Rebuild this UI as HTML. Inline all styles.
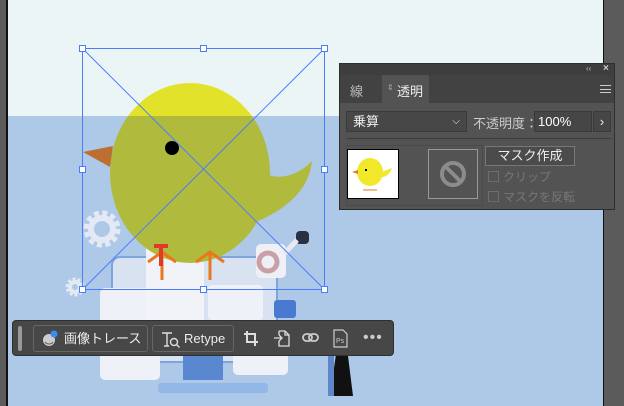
<!DOCTYPE html>
<html><head><meta charset="utf-8"><style>
*{margin:0;padding:0;box-sizing:border-box}
body{width:624px;height:406px;overflow:hidden;background:#5b5b5b;position:relative;font-family:"Liberation Sans","Noto Sans CJK JP",sans-serif}
.a{position:absolute}
#panel{left:339px;top:63px;width:276px;height:147px;background:#535353;border:1px solid #2e2e2e;color:#ddd;font-size:12px}
.cb{position:absolute;width:11px;height:11px;border:1px solid #6e6e6e}
#tb{left:12px;top:320px;width:382px;height:36px;background:#474747;border:1px solid #2f2f2f;border-radius:4px}
.btn{position:absolute;top:4px;height:27px;border:1px solid #666;border-radius:3px;color:#eee;font-size:13px;line-height:25px}
</style></head><body>
<div class="a" style="left:6px;top:0;width:2px;height:406px;background:#111"></div>
<div class="a" style="left:8px;top:0;width:595px;height:406px;background:#aec8e8;overflow:hidden">
<svg width="595" height="406" style="position:absolute;left:0;top:0">
<defs>
<clipPath id="top"><rect x="0" y="0" width="595" height="116"/></clipPath>
<clipPath id="bot"><rect x="0" y="116" width="595" height="300"/></clipPath>
<g id="bird">
<ellipse cx="182" cy="173" rx="80" ry="90"/>
<path d="M258 170 L263 176 Q285 180 304 161 Q300 200 248 222 Z"/>
</g>
</defs>
<rect x="0" y="0" width="595" height="116" fill="#ebf5f6"/>
<g>
<circle cx="94" cy="229" r="16" fill="none" stroke="#e4eaf3" stroke-width="5" stroke-dasharray="5 3.4"/>
<circle cx="94" cy="229" r="11" fill="none" stroke="#e4eaf3" stroke-width="6"/>
<circle cx="67" cy="287" r="8" fill="none" stroke="#e4eaf3" stroke-width="3" stroke-dasharray="3 2"/>
<circle cx="67" cy="287" r="5" fill="none" stroke="#e4eaf3" stroke-width="4"/>
<rect x="104" y="257" width="165" height="105" rx="8" fill="#d8e2f1" stroke="#7fa3dc" stroke-width="2"/>
<rect x="92" y="288" width="60" height="92" rx="5" fill="#eef1f8"/>
<rect x="138" y="235" width="58" height="95" rx="5" fill="#f1f3f9"/>
<rect x="200" y="285" width="55" height="35" rx="4" fill="#eef1f7"/>
<rect x="225" y="335" width="55" height="40" rx="5" fill="#eef1f7"/>
<rect x="248" y="244" width="30" height="34" rx="5" fill="#eef0f6"/>
<rect x="175" y="345" width="40" height="35" fill="#5a88d0"/>
<rect x="150" y="383" width="110" height="10" rx="3" fill="#92b8e8"/>
<rect x="266" y="300" width="22" height="18" rx="3" fill="#4a7ad0"/>
<path d="M330 340 L322 396 L345 396 L338 340Z" fill="#111"/>
<rect x="320" y="340" width="6" height="56" fill="#5e86c8"/>
</g>
<circle cx="260" cy="262" r="9" fill="none" stroke="#c9a0a8" stroke-width="5"/>
<rect x="288" y="231" width="13" height="13" rx="4" fill="#2a3140"/>
<path d="M289 240 L276 254" stroke="#e8eaf0" stroke-width="5"/>
<use href="#bird" fill="#e3e22a" clip-path="url(#top)"/>
<use href="#bird" fill="#b0bb3e" clip-path="url(#bot)"/>
<path d="M75 152 L105 146 L102 167 Z" fill="#bd6f31"/>
<circle cx="164" cy="148" r="7" fill="#000"/>
<g stroke="#e8781e" stroke-width="3" fill="none">
<path d="M154 252 V280 M140 262 L154 252 L168 262"/>
<path d="M202 252 V280 M188 262 L202 252 L216 262"/>
</g>
<path d="M146 246 h14 M153 246 v20" stroke="#e03a2a" stroke-width="4"/>
<g stroke="#4a7cff" stroke-width="1" fill="none">
<rect x="74.5" y="48.5" width="242" height="241"/>
<path d="M74.5 48.5 L316.5 289.5 M316.5 48.5 L74.5 289.5"/>
</g>
<g fill="#fff" stroke="#4a7cff">
<rect x="71.5" y="45.5" width="6" height="6"/><rect x="192.5" y="45.5" width="6" height="6"/><rect x="313.5" y="45.5" width="6" height="6"/>
<rect x="71.5" y="166.5" width="6" height="6"/><rect x="313.5" y="166.5" width="6" height="6"/>
<rect x="71.5" y="286.5" width="6" height="6"/><rect x="192.5" y="286.5" width="6" height="6"/><rect x="313.5" y="286.5" width="6" height="6"/>
</g>
</svg>
</div>
<div class="a" style="left:603px;top:0;width:1px;height:406px;background:#111"></div>

<div class="a" id="panel">
<div class="a" style="left:0;top:0;width:274px;height:11px;background:#3e3e3e"></div>
<div class="a" style="left:246px;top:0;font-size:8px;color:#bbb">‹‹</div>
<div class="a" style="left:263px;top:-1px;font-size:10px;color:#ccc;font-weight:bold">×</div>
<div class="a" style="left:0;top:11px;width:274px;height:28px;background:#424242"></div>
<div class="a" style="left:42px;top:11px;width:47px;height:28px;background:#535353"></div>
<div class="a" style="left:10px;top:17px;font-size:13px;color:#bbb">線</div>
<div class="a" style="left:47px;top:19px;font-size:8px;color:#aaa">⇕</div>
<div class="a" style="left:57px;top:17px;font-size:13px;color:#eee">透明</div>
<div class="a" style="left:260px;top:21px;width:11px;height:8px;border-top:1px solid #ccc;border-bottom:1px solid #ccc"></div>
<div class="a" style="left:260px;top:25px;width:11px;height:1px;background:#ccc"></div>
<div class="a" style="left:6px;top:47px;width:121px;height:21px;background:#474747;border:1px solid #3a3a3a;color:#eee;font-size:13px;line-height:19px;padding-left:6px">乗算<span style="position:absolute;right:6px;top:0;font-size:10px">⌵</span></div>
<div class="a" style="left:133px;top:49px;font-size:13px;color:#ccc">不透明度：</div>
<div class="a" style="left:194px;top:47px;width:58px;height:21px;background:#464646;border:1px solid #3a3a3a;color:#fff;font-size:13px;line-height:19px;padding-left:3px">100%</div>
<div class="a" style="left:253px;top:47px;width:18px;height:21px;background:#464646;border:1px solid #3a3a3a;color:#eee;font-size:13px;line-height:19px;text-align:center">›</div>
<div class="a" style="left:7px;top:74px;width:264px;height:1px;background:#3c3c3c"></div>
<div class="a" style="left:6px;top:81px;width:137px;height:61px;border:1px solid #4a4a4a"></div>
<div class="a" style="left:7px;top:85px;width:52px;height:50px;background:#fff;border:1px solid #000">
<svg width="50" height="48"><ellipse cx="22" cy="22" rx="13" ry="14" fill="#f0e828"/><path d="M34 22 L44 18 Q40 28 32 27Z" fill="#f0e828"/><path d="M4 22 L10 20 L10 24Z" fill="#e87a1e"/><rect x="17" y="19" width="2" height="2"/><path d="M15 40 h14" stroke="#e87a1e"/></svg></div>
<div class="a" style="left:88px;top:85px;width:50px;height:50px;border:1px solid #999"><svg width="48" height="48"><circle cx="24" cy="24" r="11" fill="none" stroke="#8c8c8c" stroke-width="4"/><path d="M16 16 L32 32" stroke="#8c8c8c" stroke-width="4"/></svg></div>
<div class="a" style="left:145px;top:82px;width:90px;height:20px;border:1px solid #777;background:#4b4b4b;color:#eee;font-size:13px;text-align:center;line-height:18px">マスク作成</div>
<div class="cb" style="left:148px;top:107px"></div><div class="a" style="left:163px;top:104px;font-size:12px;color:#777">クリップ</div>
<div class="cb" style="left:148px;top:127px"></div><div class="a" style="left:163px;top:124px;font-size:12px;color:#777">マスクを反転</div>
</div>

<div class="a" id="tb">
<div class="a" style="left:5px;top:5px;width:4px;height:25px;background:#999;border-radius:2px"></div>
<div class="btn" style="left:20px;width:115px;padding-left:30px">画像トレース
<svg class="a" style="left:7px;top:4px" width="18" height="18"><circle cx="8" cy="10" r="6" fill="#ccc"/><path d="M4 12 a5 5 0 0 0 8 0" stroke="#555" fill="none"/><circle cx="13" cy="4" r="3.5" fill="#3b8df2"/></svg></div>
<div class="btn" style="left:139px;width:82px;padding-left:31px">Retype
<svg class="a" style="left:8px;top:5px" width="20" height="18" fill="none" stroke="#ddd" stroke-width="1.4"><path d="M1 2h10M6 2v13M3 15h5"/><circle cx="13" cy="11" r="3.5"/><path d="M15.5 13.5l3 3"/></svg></div>
<svg class="a" style="left:230px;top:9px" width="16" height="17" fill="none" stroke="#ddd" stroke-width="2"><path d="M4 1v11h11M1 4h11v12"/></svg>
<svg class="a" style="left:260px;top:8px" width="18" height="18" fill="none" stroke="#ddd" stroke-width="1.3"><path d="M6 2h6l4 4v11H6v-5M6 6V2M12 2v4h4M1 9h8M6 6l3 3-3 3"/></svg>
<svg class="a" style="left:289px;top:11px" width="18" height="12" fill="none" stroke="#ccc" stroke-width="1.8"><rect x="1" y="2" width="9" height="7" rx="3.5"/><rect x="7" y="2" width="9" height="7" rx="3.5"/></svg>
<svg class="a" style="left:320px;top:8px" width="15" height="19" fill="none" stroke="#ccc" stroke-width="1.2"><path d="M1 1h9l4 4v13H1z"/><text x="3" y="14" font-size="7" fill="#ccc" stroke="none" font-family="Liberation Sans">Ps</text></svg>
<div class="a" style="left:350px;top:8px;color:#ccc;font-size:16px;letter-spacing:1px">•••</div>
</div>
</body></html>
